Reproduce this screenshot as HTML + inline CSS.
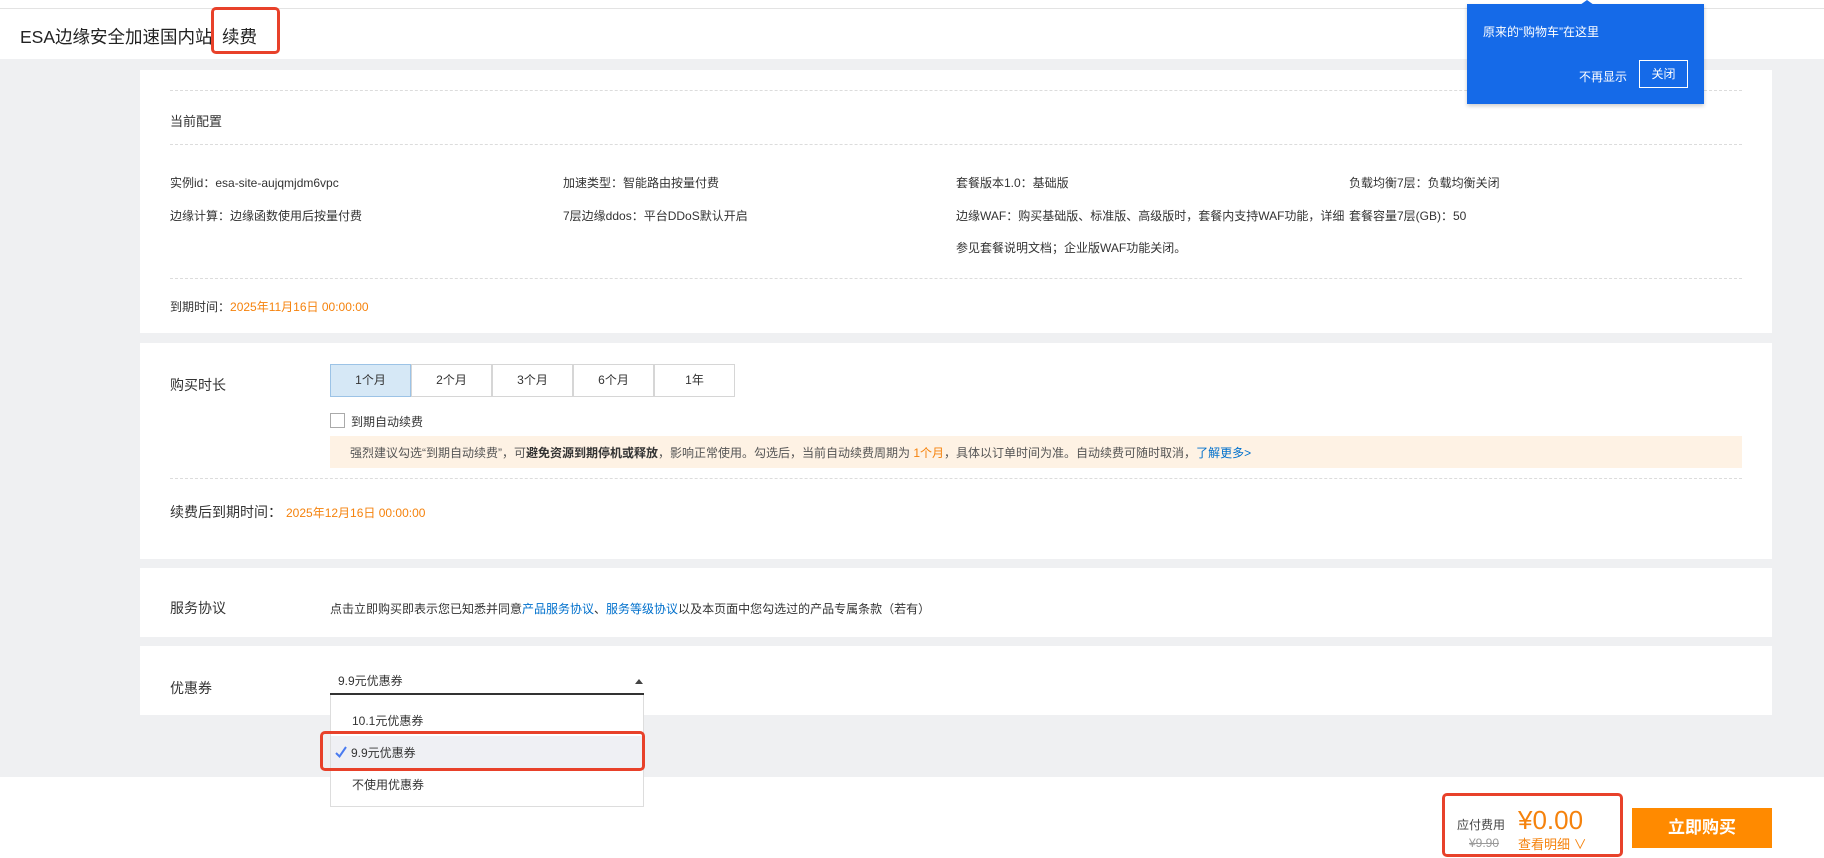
<!DOCTYPE html>
<html><head><meta charset="utf-8">
<style>
*{margin:0;padding:0;box-sizing:border-box}
body{width:1824px;height:858px;position:relative;overflow:hidden;background:#fff;font-family:"Liberation Sans","Noto Sans CJK SC",sans-serif;color:#333}
.a{position:absolute;white-space:nowrap}
.gray{position:absolute;left:0;top:59px;width:1824px;height:718px;background:#eff0f2}
.card{position:absolute;left:140px;width:1632px;background:#fff}
.dash{position:absolute;left:170px;width:1572px;border-top:1px dashed #dcdcdc}
.t12{font-size:12px;color:#333}
.lbl{font-size:14px;color:#333}
.org{color:#f5820c}
.blue{color:#0070cc}
.btn{position:absolute;top:364px;height:33px;width:81px;border:1px solid #d6d6d6;font-size:12px;text-align:center;line-height:31px;background:#fff}
</style></head><body>
<div class="a" style="left:0;top:8px;width:1824px;border-top:1px solid #e3e3e3"></div>
<div class="a" style="left:20px;top:24px;font-size:17.5px;color:#222">ESA边缘安全加速国内站</div>
<div class="a" style="left:222px;top:24px;font-size:17.5px;color:#222">续费</div>
<div class="a" style="left:211px;top:7px;width:69px;height:47px;border:3px solid #e8412a;border-radius:5px"></div>

<div class="gray"></div>

<div class="card" style="top:70px;height:263px"></div>
<div class="dash" style="top:90px"></div>
<div class="a lbl" style="left:170px;top:111px;font-size:13px">当前配置</div>
<div class="dash" style="top:144px"></div>
<div class="a t12" style="left:170px;top:174px">实例id：esa-site-aujqmjdm6vpc</div>
<div class="a t12" style="left:563px;top:174px">加速类型：智能路由按量付费</div>
<div class="a t12" style="left:956px;top:174px">套餐版本1.0：基础版</div>
<div class="a t12" style="left:1349px;top:174px">负载均衡7层：负载均衡关闭</div>
<div class="a t12" style="left:170px;top:207px">边缘计算：边缘函数使用后按量付费</div>
<div class="a t12" style="left:563px;top:207px">7层边缘ddos：平台DDoS默认开启</div>
<div class="a t12" style="left:956px;top:207px">边缘WAF：购买基础版、标准版、高级版时，套餐内支持WAF功能，详细</div>
<div class="a t12" style="left:1349px;top:207px">套餐容量7层(GB)：50</div>
<div class="a t12" style="left:956px;top:239px">参见套餐说明文档；企业版WAF功能关闭。</div>
<div class="dash" style="top:278px"></div>
<div class="a t12" style="left:170px;top:298px">到期时间：<span class="org">2025年11月16日 00:00:00</span></div>

<div class="card" style="top:343px;height:216px"></div>
<div class="a lbl" style="left:170px;top:375px">购买时长</div>
<div class="btn" style="left:330px;background:#d6e8f6;border-color:#9cc3e6">1个月</div>
<div class="btn" style="left:411px">2个月</div>
<div class="btn" style="left:492px">3个月</div>
<div class="btn" style="left:573px">6个月</div>
<div class="btn" style="left:654px">1年</div>
<div class="a" style="left:330px;top:413px;width:15px;height:15px;border:1px solid #aaa;background:#fff"></div>
<div class="a t12" style="left:351px;top:413px">到期自动续费</div>
<div class="a" style="left:330px;top:436px;width:1412px;height:32px;background:#fef2e4"></div>
<div class="a t12" style="left:350px;top:444px;color:#555">强烈建议勾选“到期自动续费”，可<b style="color:#333">避免资源到期停机或释放</b>，影响正常使用。勾选后，当前自动续费周期为 <span class="org">1个月</span>，具体以订单时间为准。自动续费可随时取消，<span class="blue">了解更多&gt;</span></div>
<div class="dash" style="top:478px"></div>
<div class="a lbl" style="left:170px;top:502px">续费后到期时间：</div>
<div class="a t12 org" style="left:286px;top:504px">2025年12月16日 00:00:00</div>

<div class="card" style="top:568px;height:69px"></div>
<div class="a lbl" style="left:170px;top:598px">服务协议</div>
<div class="a t12" style="left:330px;top:600px">点击立即购买即表示您已知悉并同意<span class="blue">产品服务协议</span>、<span class="blue">服务等级协议</span>以及本页面中您勾选过的产品专属条款（若有）</div>

<div class="card" style="top:646px;height:69px"></div>
<div class="a lbl" style="left:170px;top:678px">优惠券</div>
<div class="a t12" style="left:338px;top:672px">9.9元优惠券</div>
<div class="a" style="left:635px;top:679px;width:0;height:0;border-left:4px solid transparent;border-right:4px solid transparent;border-bottom:5px solid #444"></div>
<div class="a" style="left:330px;top:693px;width:314px;border-top:2px solid #333"></div>
<div class="a" style="left:330px;top:695px;width:314px;height:112px;background:#fff;border:1px solid #ddd;border-top:none"></div>
<div class="a" style="left:331px;top:736px;width:312px;height:32px;background:#eff0f4"></div>
<div class="a t12" style="left:352px;top:712px">10.1元优惠券</div>
<div class="a t12" style="left:351px;top:744px">9.9元优惠券</div>
<svg class="a" style="left:334px;top:745px" width="14" height="14" viewBox="0 0 14 14"><path d="M2 8 L5.5 11.5 L12 2" fill="none" stroke="#4a7bf0" stroke-width="2"/></svg>
<div class="a t12" style="left:352px;top:776px">不使用优惠券</div>
<div class="a" style="left:320px;top:731px;width:325px;height:40px;border:3px solid #e8412a;border-radius:5px"></div>

<div class="a" style="left:1467px;top:4px;width:237px;height:100px;background:#156ae8;box-shadow:0 2px 4px rgba(0,0,0,.2)"></div>
<div class="a" style="left:1580px;top:0;width:0;height:0;border-left:7px solid transparent;border-right:7px solid transparent;border-bottom:5px solid #156ae8"></div>
<div class="a" style="left:1483px;top:23px;font-size:12px;color:#fff">原来的“购物车”在这里</div>
<div class="a" style="left:1579px;top:68px;font-size:12px;color:#fff">不再显示</div>
<div class="a" style="left:1639px;top:60px;width:49px;height:28px;border:1px solid #fff;color:#fff;font-size:12px;text-align:center;line-height:26px">关闭</div>

<div class="a" style="left:1442px;top:793px;width:181px;height:64px;border:3px solid #e8412a;border-radius:5px"></div>
<div class="a" style="left:1457px;top:816px;font-size:12px;color:#444">应付费用</div>
<div class="a" style="left:1518px;top:805px;font-size:26px;color:#f5820c">¥0.00</div>
<div class="a" style="left:1469px;top:836px;font-size:12px;color:#999;text-decoration:line-through">¥9.90</div>
<div class="a" style="left:1518px;top:834px;font-size:13px;color:#f5820c">查看明细 ∨</div>
<div class="a" style="left:1632px;top:808px;width:140px;height:40px;background:#ff8a00;color:#fff;font-size:17px;font-weight:bold;text-align:center;line-height:40px">立即购买</div>
</body></html>
